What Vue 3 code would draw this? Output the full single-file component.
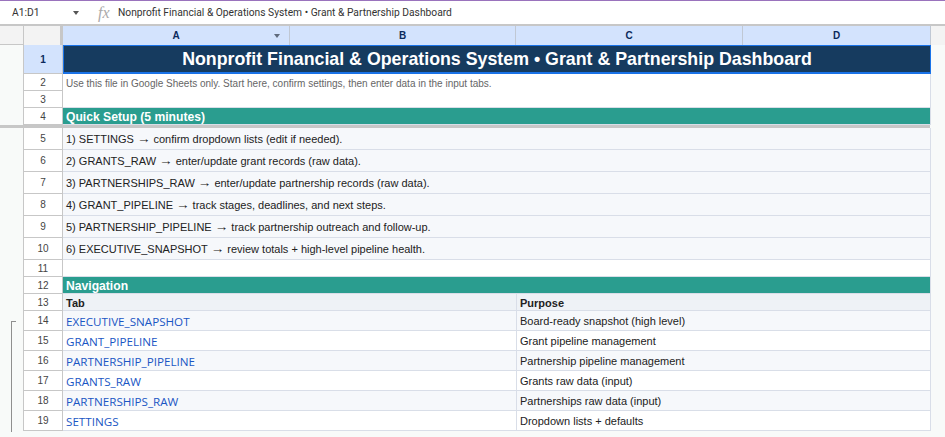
<script setup>
const setup = [
  ['1) SETTINGS', 'confirm dropdown lists (edit if needed).'],
  ['2) GRANTS_RAW', 'enter/update grant records (raw data).'],
  ['3) PARTNERSHIPS_RAW', 'enter/update partnership records (raw data).'],
  ['4) GRANT_PIPELINE', 'track stages, deadlines, and next steps.'],
  ['5) PARTNERSHIP_PIPELINE', 'track partnership outreach and follow-up.'],
  ['6) EXECUTIVE_SNAPSHOT', 'review totals + high-level pipeline health.']
]

const nav = [
  { tab: 'EXECUTIVE_SNAPSHOT', purpose: 'Board-ready snapshot (high level)' },
  { tab: 'GRANT_PIPELINE', purpose: 'Grant pipeline management' },
  { tab: 'PARTNERSHIP_PIPELINE', purpose: 'Partnership pipeline management' },
  { tab: 'GRANTS_RAW', purpose: 'Grants raw data (input)' },
  { tab: 'PARTNERSHIPS_RAW', purpose: 'Partnerships raw data (input)' },
  { tab: 'SETTINGS', purpose: 'Dropdown lists + defaults' }
]
</script>

<template>
  <div class="page">
    <div class="formula-bar">
      <div class="name-box">
        <span>A1:D1</span>
        <i class="arrow"></i>
      </div>
      <div class="formula">
        <span class="fx">fx</span>
        <span>Nonprofit Financial &amp; Operations System • Grant &amp; Partnership Dashboard</span>
      </div>
    </div>

    <div class="row col-heads">
      <div class="gutter"></div>
      <div class="corner"></div>
      <div class="col-head">A<i class="arrow small"></i></div>
      <div class="col-head">B</div>
      <div class="col-head">C</div>
      <div class="col-head">D</div>
    </div>

    <div class="row h29">
      <div class="gutter"></div>
      <div class="num selected">1</div>
      <div class="cell title">Nonprofit Financial &amp; Operations System • Grant &amp; Partnership Dashboard</div>
    </div>
    <div class="row h17">
      <div class="gutter"></div>
      <div class="num">2</div>
      <div class="cell note">Use this file in Google Sheets only. Start here, confirm settings, then enter data in the input tabs.</div>
    </div>
    <div class="row h17">
      <div class="gutter"></div>
      <div class="num">3</div>
      <div class="cell blank"></div>
    </div>
    <div class="row h17">
      <div class="gutter"></div>
      <div class="num">4</div>
      <div class="cell section">Quick Setup (5 minutes)</div>
    </div>

    <div class="freeze"></div>

    <div v-for="(line, i) in setup" :key="line[0]" class="row h22">
      <div class="gutter"></div>
      <div class="num">{{ i + 5 }}</div>
      <div class="cell step">
        <span>{{ line[0] }} <span class="to">→</span> {{ line[1] }}</span>
      </div>
    </div>

    <div class="row h17">
      <div class="gutter"></div>
      <div class="num">11</div>
      <div class="cell blank"></div>
    </div>
    <div class="row h17">
      <div class="gutter"></div>
      <div class="num">12</div>
      <div class="cell section">Navigation</div>
    </div>
    <div class="row h17">
      <div class="gutter"></div>
      <div class="num">13</div>
      <div class="cell half head">Tab</div>
      <div class="cell half head right">Purpose</div>
    </div>

    <div v-for="(item, i) in nav" :key="item.tab" class="row h20">
      <div class="gutter">
        <i v-if="i === 0" class="bracket"></i>
      </div>
      <div class="num">{{ i + 14 }}</div>
      <div class="cell half link" :class="{ alt: i % 2 === 0 }">{{ item.tab }}</div>
      <div class="cell half right" :class="{ alt: i % 2 === 0 }">{{ item.purpose }}</div>
    </div>
  </div>
</template>

<style>
body {
  background: #f8f9fa;
}
</style>

<style scoped>
.page {
  width: 945px;
  height: 437px;
  overflow: hidden;
  background: #f8faf9;
  border-top: 1px solid #9a73bd;
  box-sizing: border-box;
  font-family: "Liberation Sans", Arial, sans-serif;
  font-size: 11px;
  color: #222;
}

.formula-bar {
  display: flex;
  height: 24px;
  background: #fff;
  border-bottom: 1px solid #c7c7c7;
  box-sizing: border-box;
  font-family: Roboto, sans-serif;
  font-size: 10.25px;
  color: #333;
}

.name-box {
  width: 89px;
  display: flex;
  align-items: center;
  justify-content: space-between;
  padding: 0 10px 0 12px;
  box-sizing: border-box;
}

.formula {
  flex: 1;
  display: flex;
  align-items: center;
  gap: 8px;
  padding-left: 9px;
  border-bottom: 1px solid #c7c7c7;
  margin-bottom: -1px;
}

.fx {
  width: 12px;
  font-family: "Liberation Serif", serif;
  font-style: italic;
  font-size: 16px;
  color: #aaa;
}

.arrow {
  width: 0;
  height: 0;
  border-left: 3.5px solid transparent;
  border-right: 3.5px solid transparent;
  border-top: 4px solid #555;
}

.arrow.small {
  position: absolute;
  right: 9px;
  top: 8px;
  border-top-color: #5f6a7c;
}

.row {
  display: flex;
  width: 945px;
}

.h29 { height: 29px; }
.h17 { height: 17px; }
.h22 { height: 22px; }
.h20 { height: 20px; }

.gutter {
  position: relative;
  width: 23px;
  flex: none;
}

.bracket {
  position: absolute;
  left: 11px;
  top: 10px;
  width: 5px;
  height: 111px;
  border-left: 1px solid #8f8f8f;
  border-top: 1px solid #8f8f8f;
  box-sizing: border-box;
}

.num {
  width: 40px;
  flex: none;
  display: flex;
  align-items: center;
  justify-content: center;
  background: #fff;
  border-left: 1px solid #c7c7c7;
  border-right: 1px solid #c7c7c7;
  border-bottom: 1px solid #c7c7c7;
  box-sizing: border-box;
  font-size: 10px;
  color: #444;
}

.num.selected {
  background: #d3e3fd;
  color: #0b2a5c;
  font-weight: 700;
}

.col-heads {
  height: 20px;
  background: #f3f3f3;
  border-top: 1px solid #c7c7c7;
  box-sizing: border-box;
}

.col-heads .gutter {
  border-bottom: 1px solid #c7c7c7;
}

.corner {
  width: 40px;
  flex: none;
  border-left: 1px solid #c7c7c7;
  border-right: 3px solid #c7c7c7;
  box-sizing: border-box;
}

.col-head {
  position: relative;
  flex: none;
  display: flex;
  align-items: center;
  justify-content: center;
  background: #d3e3fd;
  border-right: 1px solid #c0c8d4;
  box-sizing: border-box;
  font-size: 10px;
  font-weight: 700;
  color: #0b2a5c;
}

.col-head:nth-child(3) { width: 227px; }
.col-head:nth-child(4) { width: 226px; }
.col-head:nth-child(5) { width: 227px; }
.col-head:nth-child(6) { width: 188px; }

.cell {
  width: 868px;
  flex: none;
  display: flex;
  align-items: center;
  padding-left: 3px;
  box-sizing: border-box;
  background: #fff;
  border-right: 1px solid #d9dee8;
  border-bottom: 1px solid #d9dee8;
}

.title {
  justify-content: center;
  padding: 1px 0 0;
  background: #163b5f;
  border: 1px solid #1a73e8;
  border-width: 1px 1px 2px 1px;
  color: #fff;
  font-size: 17.8px;
  font-weight: 700;
}

.note {
  padding-top: 1px;
  border-bottom: 0;
  font-size: 10px;
  color: #666;
}

.section {
  padding-top: 1px;
  background: #2a9d8f;
  color: #fff;
  font-size: 12.15px;
  font-weight: 700;
}

.freeze {
  width: 930px;
  height: 3px;
  background: #c7c7c7;
}

.step {
  background: #f6f8fb;
  color: #222;
}

.to {
  font-size: 13.5px;
  line-height: 1;
}

.half {
  width: 453px;
  border-right: 0;
}

.half.right {
  width: 415px;
  border-left: 1px solid #d9dee8;
  border-right: 1px solid #d9dee8;
}

.alt {
  background: #f6f8fb;
}

.head {
  padding-top: 2px;
  background: #eef2f6;
  font-weight: 700;
}

.link {
  padding-top: 1px;
  font-family: "Open Sans", sans-serif;
  font-size: 11.65px;
  color: #1a56c4;
}
</style>
